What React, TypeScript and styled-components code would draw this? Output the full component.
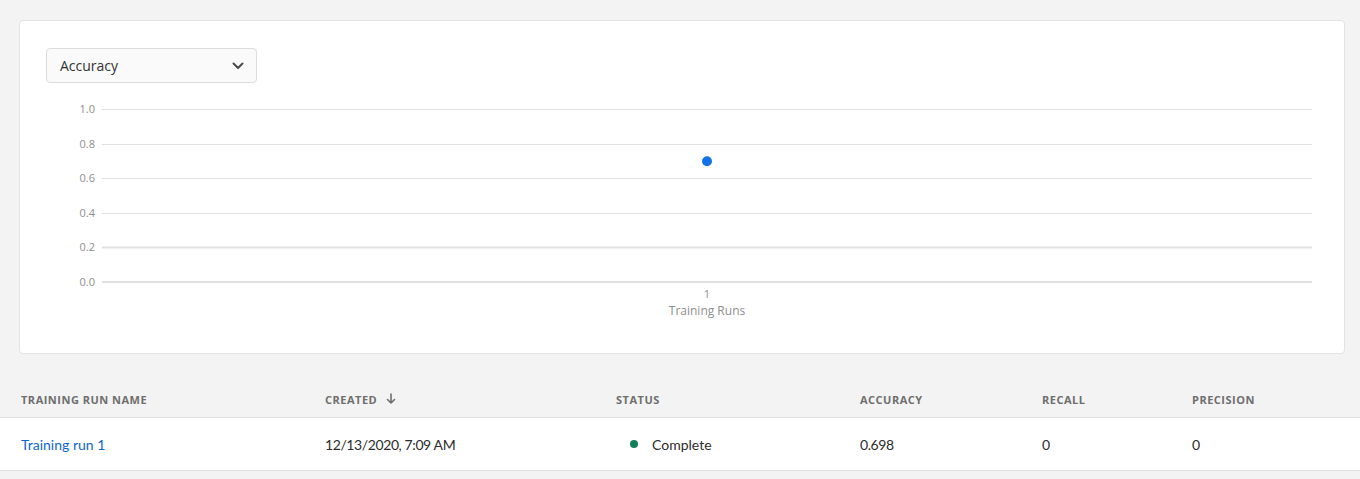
import React from "react";
import styled, { createGlobalStyle } from "styled-components";

const Global = createGlobalStyle`
  html, body { margin: 0; padding: 0; background: #f3f3f3; }
  body { font-family: "Lato", "Open Sans", sans-serif; color: #2c2c2c; }
  * { box-sizing: border-box; }
`;

const Page = styled.div`
  width: 1360px;
  height: 479px;
  overflow: hidden;
  background: #f3f3f3;
  padding-top: 20px;
`;

const Card = styled.section`
  margin: 0 15px 0 19px;
  height: 334px;
  background: #fff;
  border: 1px solid #e3e3e3;
  border-radius: 4px;
  padding: 27px 0 0 26px;
`;

const Select = styled.button`
  width: 211px;
  height: 35px;
  display: flex;
  align-items: center;
  justify-content: space-between;
  padding: 0 12px 0 13px;
  background: #fafafa;
  border: 1px solid #dcdcdc;
  border-radius: 4px;
  font-family: "Open Sans", sans-serif;
  font-size: 14px;
  color: #323232;
  cursor: pointer;
`;

const ChartSvg = styled.svg`
  display: block;
  margin-left: -26px;
  margin-top: 6px;
`;

const Table = styled.div`
  margin-top: 27px;
`;

const cols = "304px 291px 244px 182px 150px 1fr";

const HeadRow = styled.div`
  display: grid;
  grid-template-columns: ${cols};
  height: 37px;
  align-items: center;
  border-bottom: 1px solid #dedede;
`;

const HeadCell = styled.div`
  padding-left: 21px;
  font-family: "Open Sans", sans-serif;
  font-size: 11px;
  font-weight: 700;
  letter-spacing: 0.5px;
  text-transform: uppercase;
  color: #6e6e6e;
  display: flex;
  align-items: center;
  gap: 9px;
`;

const BodyRow = styled.div`
  display: grid;
  grid-template-columns: ${cols};
  height: 53px;
  align-items: center;
  background: #fff;
  border-bottom: 1px solid #dedede;
`;

const Cell = styled.div<{ $numeric?: boolean }>`
  padding-left: 21px;
  font-size: 14px;
  color: #2c2c2c;
  display: flex;
  align-items: center;
  letter-spacing: ${(p) => (p.$numeric ? "-0.4px" : "normal")};
`;

const Link = styled.a`
  color: #0d66d0;
  text-decoration: none;
  font-size: 14px;
`;

const Dot = styled.span<{ $color: string }>`
  width: 8px;
  height: 8px;
  border-radius: 50%;
  background: ${(p) => p.$color};
  margin: 0 14px 0 14px;
`;

const Chevron = () => (
  <svg width="12" height="8" viewBox="0 0 12 8">
    <path d="M1.5 1.5 L6 6 L10.5 1.5" fill="none" stroke="#4b4b4b" strokeWidth="2" strokeLinecap="round" strokeLinejoin="round" />
  </svg>
);

const ArrowDown = () => (
  <svg width="10" height="12" viewBox="0 0 10 12">
    <path d="M5 1 V10 M1.5 6.5 L5 10 L8.5 6.5" fill="none" stroke="#6e6e6e" strokeWidth="1.6" strokeLinecap="round" strokeLinejoin="round" />
  </svg>
);

const Chart = () => {
  const ticks = [1.0, 0.8, 0.6, 0.4, 0.2, 0.0];
  const x0 = 82;
  const x1 = 1292;
  const top = 20;
  const bottom = 193;
  const yOf = (v: number) => bottom - v * (bottom - top);
  const cx = (x0 + x1) / 2;
  return (
    <ChartSvg width="1325" height="240" viewBox="0 0 1325 240">
      {ticks.map((t, i) => {
        const y = yOf(t);
        const thick = i >= 4;
        return (
          <g key={t}>
            <line x1={x0} x2={x1} y1={thick ? y : Math.round(y) + 0.5} y2={thick ? y : Math.round(y) + 0.5} stroke="#e1e1e1" strokeWidth={thick ? 2 : 1} />
            <text x={75} y={y + 4} textAnchor="end" fontSize="11" fill="#8e8e8e" fontFamily="Open Sans, sans-serif">
              {t.toFixed(1)}
            </text>
          </g>
        );
      })}
      <circle cx={cx} cy={yOf(0.698)} r="5" fill="#1473e6" />
      <text x={cx} y={209} textAnchor="middle" fontSize="11" fill="#8e8e8e" fontFamily="Open Sans, sans-serif">1</text>
      <text x={cx} y={226} textAnchor="middle" fontSize="12" fill="#8e8e8e" fontFamily="Open Sans, sans-serif">Training Runs</text>
    </ChartSvg>
  );
};

export default function App() {
  return (
    <Page>
      <Global />
      <Card>
        <Select>
          <span>Accuracy</span>
          <Chevron />
        </Select>
        <Chart />
      </Card>
      <Table>
        <HeadRow>
          <HeadCell>Training Run Name</HeadCell>
          <HeadCell>
            Created <ArrowDown />
          </HeadCell>
          <HeadCell>Status</HeadCell>
          <HeadCell>Accuracy</HeadCell>
          <HeadCell>Recall</HeadCell>
          <HeadCell>Precision</HeadCell>
        </HeadRow>
        <BodyRow>
          <Cell>
            <Link href="#">Training run 1</Link>
          </Cell>
          <Cell $numeric>12/13/2020, 7:09 AM</Cell>
          <Cell>
            <Dot $color="#12805c" />
            Complete
          </Cell>
          <Cell $numeric>0.698</Cell>
          <Cell $numeric>0</Cell>
          <Cell $numeric>0</Cell>
        </BodyRow>
      </Table>
    </Page>
  );
}
